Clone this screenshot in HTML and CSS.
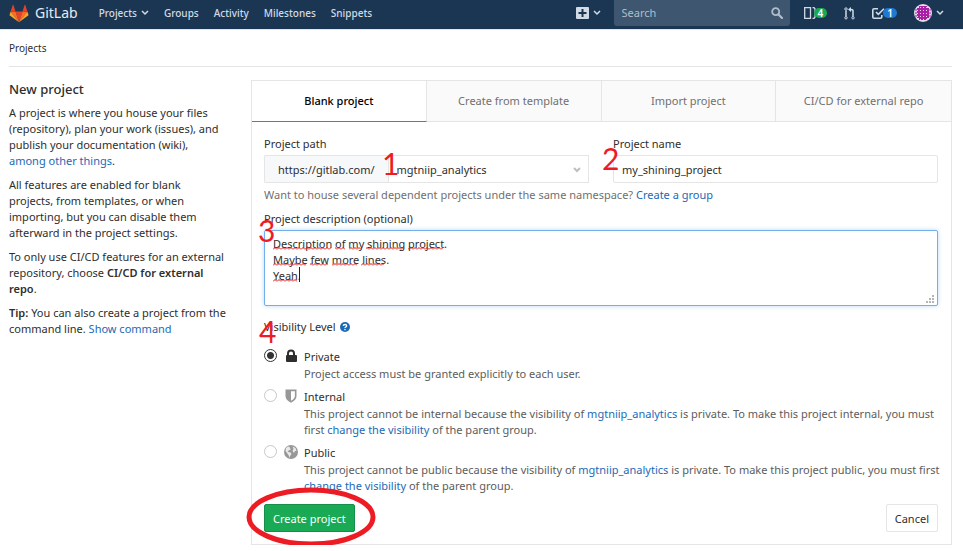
FILE: index.html
```html
<!DOCTYPE html>
<html lang="en">
<head>
<meta charset="utf-8">
<title>New project · GitLab</title>
<link rel="stylesheet" href="styles.css">
</head>
<body>
<header class="navbar">
  <a class="brand" href="#">
    <svg width="20" height="19" viewBox="0 0 36 36" aria-hidden="true">
      <path fill="#e24329" d="M18 34.4 24.6 14H11.4z"/>
      <path fill="#fc6d26" d="M18 34.4 11.4 14H2.1z"/>
      <path fill="#fca326" d="M2.1 14 .1 20.2a1.4 1.4 0 0 0 .5 1.5L18 34.4z"/>
      <path fill="#e24329" d="M2.1 14h9.3L7.4 1.7c-.2-.6-1.1-.6-1.3 0z"/>
      <path fill="#fc6d26" d="M18 34.4 24.6 14h9.3z"/>
      <path fill="#fca326" d="m33.9 14 2 6.2c.2.5 0 1.1-.5 1.5L18 34.4z"/>
      <path fill="#e24329" d="M33.9 14h-9.3l4-12.3c.2-.6 1.1-.6 1.3 0z"/>
    </svg>
    <span>GitLab</span>
  </a>
  <nav class="links">
    <a href="#">Projects <svg class="chevron" width="8" height="6" viewBox="0 0 8 6" aria-hidden="true"><path d="M1 1l3 3 3-3"/></svg></a>
    <a href="#">Groups</a>
    <a href="#">Activity</a>
    <a href="#">Milestones</a>
    <a href="#">Snippets</a>
  </nav>
  <button class="icon-button plus" type="button" aria-label="New">
    <svg width="13" height="12" viewBox="0 0 13 12" aria-hidden="true"><rect width="13" height="12" rx="1" fill="#d1dbe6"/><path d="M2.500 6h8M6.500 2v8" stroke="#1b3653" stroke-width="2"/></svg>
    <svg class="chevron" width="8" height="6" viewBox="0 0 8 6" aria-hidden="true"><path d="M1 1l3 3 3-3"/></svg>
  </button>
  <form class="search">
    <input type="search" placeholder="Search" aria-label="Search">
    <svg width="12" height="12" viewBox="0 0 12 12" aria-hidden="true"><circle cx="4.700" cy="4.700" r="3.500" fill="none" stroke="#afbecb" stroke-width="1.800"/><path d="M7.500 7.500 11 11" stroke="#afbecb" stroke-width="2.200" stroke-linecap="round"/></svg>
  </form>
  <div class="tools">
    <a class="tool issues" href="#" aria-label="Issues">
      <svg width="12" height="12" viewBox="0 0 12 12" aria-hidden="true"><path d="M.7.700h5.800v10.600H.700zM8.500.700h1.500l1 1v8.600l-1 1H8.500" fill="none" stroke="#d1dbe6" stroke-width="1.300"/></svg><span class="badge green">4</span>
    </a>
    <a class="tool merges" href="#" aria-label="Merge requests">
      <svg width="11" height="13" viewBox="0 0 11 13" aria-hidden="true"><g fill="none" stroke="#d1dbe6"><path d="M2 3.500v6M9 9.500V4q0-1.500-2-1.500H5.500" stroke-width="1.500"/><circle cx="2" cy="2" r="1.200"/><circle cx="2" cy="10.800" r="1.200"/><circle cx="9" cy="10.800" r="1.200"/></g><path d="M7 0v5L4 2.500z" fill="#d1dbe6"/></svg>
    </a>
    <a class="tool todos" href="#" aria-label="Todos">
      <svg width="13" height="12" viewBox="0 0 13 12" aria-hidden="true"><path d="M6 1.700H2Q.800 1.700.800 3v7q0 1.200 1.200 1.200h6.500q1.300 0 1.300-1.200V8M4 5l2.300 2.400L12 1.700" fill="none" stroke="#d1dbe6" stroke-width="1.600"/></svg><span class="badge blue">1</span>
    </a>
    <button class="icon-button" type="button" aria-label="Account">
      <svg width="18" height="18" viewBox="0 0 18 18" aria-hidden="true">
        <defs>
          <pattern id="dots" width="3" height="3" patternUnits="userSpaceOnUse"><rect width="3" height="3" fill="#a91fa6"/><path d="M0 0h1v1H0z" fill="#efd5ee"/></pattern>
          <clipPath id="round"><circle cx="9" cy="9" r="9"/></clipPath>
        </defs>
        <g clip-path="url(#round)">
          <rect width="18" height="18" fill="#e3dce9"/>
          <path d="M5 2h8v2h2v10h-2v2H5v-2H3V4h2z" fill="url(#dots)"/>
          <path d="M1 6h2M1 9h2M1 12h2M15 6h2M15 9h2M15 12h2" stroke="#a91fa6"/>
        </g>
      </svg>
      <svg class="chevron" width="8" height="6" viewBox="0 0 8 6" aria-hidden="true"><path d="M1 1l3 3 3-3"/></svg>
    </button>
  </div>
</header>

<div class="container">
  <nav class="breadcrumb"><a href="#">Projects</a></nav>
  <main class="page">
    <aside class="intro">
      <h1>New project</h1>
      <p>A project is where you house your files (repository), plan your work (issues), and publish your documentation (wiki),<br><a href="#">among other things</a>.</p>
      <p>All features are enabled for blank projects, from templates, or when importing, but you can disable them afterward in the project settings.</p>
      <p>To only use CI/CD features for an external repository, choose <strong>CI/CD for external repo</strong>.</p>
      <p><strong>Tip:</strong> You can also create a project from the command line. <a href="#">Show command</a></p>
    </aside>

    <section class="panel">
      <nav class="tabs">
        <a class="active" href="#">Blank project</a>
        <a href="#">Create from template</a>
        <a href="#">Import project</a>
        <a href="#">CI/CD for external repo</a>
      </nav>
      <form class="form">
        <div class="row">
          <div class="field">
            <label for="path">Project path</label>
            <div class="path">
              <span class="prefix">https://gitlab.com/</span>
              <select id="path"><option>mgtniip_analytics</option></select>
              <svg class="caret" width="8" height="6" viewBox="0 0 8 6" aria-hidden="true"><path d="M1 1l3 3 3-3"/></svg>
            </div>
            <span class="mark one">1</span>
          </div>
          <div class="field">
            <label for="name">Project name</label>
            <input class="text" id="name" type="text" value="my_shining_project">
            <span class="mark two">2</span>
          </div>
        </div>
        <p class="hint">Want to house several dependent projects under the same namespace? <a href="#">Create a group</a></p>

        <div class="field">
          <label for="description">Project description (optional)</label>
          <div class="editor">
            <textarea id="description" spellcheck="false">Description of my shining project.
Maybe few more lines.
Yeah.</textarea>
            <svg class="spelling" width="180" height="56" viewBox="0 0 180 56" aria-hidden="true">
              <defs><pattern id="wave" width="4" height="16" patternUnits="userSpaceOnUse"><path d="M0 11.500 2 9.500 4 11.500" fill="none" stroke="#e00b0b"/></pattern></defs>
              <path fill="url(#wave)" d="M0 8h58v5H0zM62 8h10v5H62zM76 8h13v5H76zM93 8h38v5H93zM135 8h35v5h-35zM0 24h33v5H0zM37 24h18v5H37zM59 24h25v5H59zM88 24h23v5H88zM0 40h24v5H0z"/>
              <path d="M26.500 29v15" stroke="#222"/>
            </svg>
            <svg class="grip" width="8" height="8" viewBox="0 0 8 8" aria-hidden="true"><path fill="#b5b5b5" d="M6 0h2v2H6zM3 3h2v2H3zM6 3h2v2H6zM0 6h2v2H0zM3 6h2v2H3zM6 6h2v2H6z"/></svg>
          </div>
          <span class="mark three">3</span>
        </div>

        <fieldset class="visibility">
          <legend>Visibility Level
            <svg width="10" height="10" viewBox="0 0 10 10" aria-hidden="true"><circle cx="5" cy="5" r="5" fill="#1b69b6"/><path d="M3.300 3.900Q3.400 2.500 5 2.500t1.700 1.300Q6.700 4.500 5.800 5T5 6.100M5 7v1.300" fill="none" stroke="#fff" stroke-width="1.300"/></svg>
            <span class="mark four">4</span>
          </legend>
          <div class="option">
            <input type="radio" name="level" id="private" checked>
            <svg width="14" height="14" viewBox="0 0 14 14" aria-hidden="true"><path d="M4 7V4.500a3 3 0 0 1 6 0V7" fill="none" stroke="#2e2e2e" stroke-width="2"/><rect x="2" y="6" width="11" height="7" rx="1" fill="#2e2e2e"/></svg>
            <div><label for="private">Private</label>
              <p>Project access must be granted explicitly to each user.</p></div>
          </div>
          <div class="option">
            <input type="radio" name="level" id="internal" disabled>
            <svg width="14" height="14" viewBox="0 0 14 14" aria-hidden="true"><path d="M1.500.500h11V7q0 4-5.500 6.800Q1.500 11 1.500 7z" fill="#979797"/><path d="M7 2.200h3.900V7q0 2.700-3.900 4.800z" fill="#fff"/></svg>
            <div><label for="internal">Internal</label>
              <p>This project cannot be internal because the visibility of <a href="#">mgtniip_analytics</a> is private. To make this project internal, you must first <a href="#">change the visibility</a> of the parent group.</p></div>
          </div>
          <div class="option">
            <input type="radio" name="level" id="public" disabled>
            <svg width="14" height="14" viewBox="0 0 14 14" aria-hidden="true"><circle cx="7" cy="7" r="7" fill="#979797"/><path d="m2 3 2-1.500 2 .500-.500 1L7 4 5 5.500 3.500 6l1 1 2 .500 1 1.500-1.500 2-.500 2L4.500 10 3 8 1.500 6zM8.500 1.500l3 1.500 1 3-1.500 0L10 8 8.500 6l1-2z" fill="#fff" opacity=".8"/></svg>
            <div><label for="public">Public</label>
              <p>This project cannot be public because the visibility of <a href="#">mgtniip_analytics</a> is private. To make this project public, you must first <a href="#">change the visibility</a> of the parent group.</p></div>
          </div>
        </fieldset>

        <div class="actions">
          <button class="create" type="button">Create project</button>
          <button class="cancel" type="button">Cancel</button>
          <svg class="ring" width="130" height="60" viewBox="0 0 130 60" aria-hidden="true"><ellipse cx="65" cy="30" rx="62" ry="27" fill="none" stroke="#ed1c24" stroke-width="5"/></svg>
        </div>
      </form>
    </section>
  </main>
</div>
</body>
</html>
```
FILE: styles.css
```css
* { box-sizing: border-box; }
body {
  margin: 0;
  background: #fff;
  color: #2e2e2e;
  font: 11px/16px "Noto Sans", sans-serif;
}
a { color: #1b69b6; text-decoration: none; }
p { margin: 0; }
button, input, select, textarea { font: inherit; color: inherit; }
svg { display: block; flex: none; }

.navbar {
  display: flex;
  align-items: center;
  height: 30px;
  padding: 0 19px 3px 9px;
  background: #1b3653;
  border-bottom: 1px solid #dfe3ea;
}
.navbar a { color: #d1dbe6; }
.brand { display: flex; align-items: center; gap: 6px; }
.navbar .brand { color: #e6ebf1; font-size: 14px; }
.links {
  display: flex;
  gap: 15px;
  margin-left: 21px;
  margin-right: auto;
  font-size: 10px;
  font-weight: 500;
}
.links a { display: flex; align-items: center; gap: 4px; }
.chevron path { fill: none; stroke: #d1dbe6; stroke-width: 1.5; }
.icon-button {
  display: flex;
  align-items: center;
  gap: 4px;
  padding: 0;
  border: 0;
  background: none;
}
.search {
  display: flex;
  align-items: center;
  width: 176px;
  height: 26px;
  margin-left: 13px;
  padding: 0 7px 0 8px;
  border-radius: 0 0 3px 3px;
  background: #3e566f;
}
.search input {
  flex: 1;
  min-width: 0;
  padding: 0;
  border: 0;
  outline: 0;
  background: none;
}
.search input::placeholder { color: #afbecb; opacity: 1; }
.tools { display: flex; align-items: center; margin-left: 14px; gap: 17px; }
.tool { display: flex; align-items: center; }
.badge {
  height: 10px;
  margin-left: -2px;
  padding: 0 4px;
  border-radius: 5px;
  color: #fff;
  font-size: 10px;
  font-weight: 600;
  line-height: 10px;
}
.green { background: #1aaa55; }
.blue { background: #1f78d1; }

.container { padding: 0 11px 0 9px; }
.breadcrumb { padding: 10px 0; border-bottom: 1px solid #e5e5e5; font-size: 10px; }
.breadcrumb a { color: #2e2e2e; }
.page { display: grid; grid-template-columns: 242px 1fr; padding-top: 13px; }
.intro { padding-right: 24px; }
.intro p { margin-bottom: 8px; }
.intro strong { font-weight: 600; }
h1 { margin: 0 0 7px; font-size: 13px; font-weight: 500; line-height: 18px; }

.panel { border: 1px solid #e5e5e5; }
.tabs { display: grid; grid-template-columns: repeat(4, 1fr); }
.tabs a {
  padding: 12px 0;
  border-right: 1px solid #e5e5e5;
  border-bottom: 1px solid #e5e5e5;
  background: #fafafa;
  color: #707070;
  text-align: center;
}
.tabs a:last-child { border-right: 0; }
.tabs .active {
  border-bottom-color: #4a7fae;
  background: #fff;
  color: #000;
  font-weight: 500;
}

.form { padding: 14px 13px 12px 12px; }
.row { display: grid; grid-template-columns: 1fr 1fr; gap: 24px; }
.field { position: relative; }
.field > label { display: block; margin-bottom: 3px; }
.path { position: relative; display: flex; height: 28px; }
.prefix {
  padding: 6px 13px;
  border: 1px solid #e5e5e5;
  border-right: 0;
  border-radius: 2px 0 0 2px;
  background: #f7f8fa;
}
.path select {
  flex: 1;
  min-width: 0;
  padding: 1px 8px 0;
  border: 1px solid #e5e5e5;
  background: #fff;
  appearance: none;
}
.caret { position: absolute; right: 8px; top: 12px; }
.caret path { fill: none; stroke: #bfbfbf; stroke-width: 2; }
.text {
  display: block;
  width: 100%;
  height: 28px;
  padding: 1px 8px 0;
  border: 1px solid #e5e5e5;
  border-radius: 2px;
}
.hint { margin: 4px 0 8px; color: #707070; }
.editor { position: relative; }
textarea {
  display: block;
  width: 100%;
  height: 76px;
  padding: 5px 8px;
  border: 1px solid #73afea;
  border-radius: 2px;
  outline: 0;
  box-shadow: 0 0 4px #b9d9f7;
  resize: none;
}
.spelling { position: absolute; left: 9px; top: 8px; }
.grip { position: absolute; right: 4px; bottom: 3px; }

/* The longest explanation reaches a little into the panel's padding. */
.visibility { margin: 13px -8px 0 0; padding: 0; border: 0; }
legend {
  position: relative;
  display: flex;
  align-items: center;
  gap: 4px;
  padding: 0;
  margin-bottom: 14px;
}
.option { display: flex; margin-bottom: 7px; }
.option input {
  flex: none;
  width: 13px;
  height: 13px;
  margin: 0 7px 0 0;
  border: 1px solid #c8c8c8;
  border-radius: 50%;
  appearance: none;
}
.option input:checked {
  border-color: #333;
  background: radial-gradient(circle, #333 0 3px, #fff 4px);
}
.option svg { margin-right: 6px; }
.option p { margin-top: 1px; color: #5c5c5c; }
.option label { display: block; }

.actions { position: relative; display: flex; justify-content: space-between; margin-top: 3px; }
.actions button { height: 28px; padding: 2px 8px 0; border-radius: 2px; }
.create { border: 1px solid #168f48; background: #1aaa55; }
.actions .create { color: #fff; }
.cancel { border: 1px solid #e5e5e5; background: #fff; }
.ring { position: absolute; left: -18px; top: -17px; }

.mark {
  position: absolute;
  color: #ed1c24;
  font: 30px/30px Lato, sans-serif;
}
.one { left: 118px; top: 12px; }
.two { left: -11px; top: 7px; }
.three { left: -6px; top: 4px; }
.four { left: -5px; top: -3px; }
```
